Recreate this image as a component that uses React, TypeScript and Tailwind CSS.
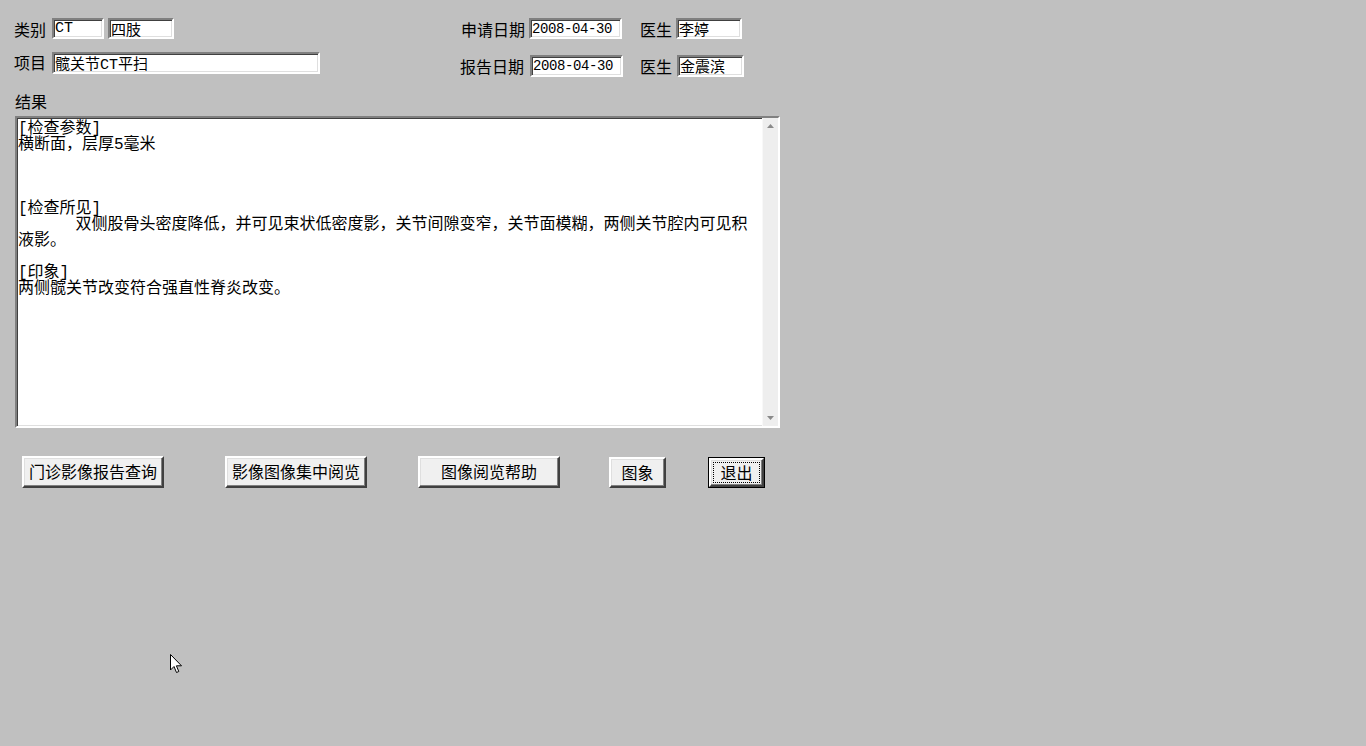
import React from "react";

const sunken =
  "border-2 border-t-[#808080] border-l-[#808080] border-b-white border-r-white shadow-[inset_1px_1px_0_#404040,inset_-1px_-1px_0_#dfdfdf] bg-white";
const raised =
  "border-2 border-t-white border-l-white border-b-[#404040] border-r-[#404040] shadow-[inset_-1px_-1px_0_#808080,inset_1px_1px_0_#dfdfdf] bg-[#f0f0f0]";

const cjk = { fontFamily: '"Noto Sans CJK SC", "Noto Sans", sans-serif' };
const mono = { fontFamily: '"Liberation Mono", "Noto Sans CJK SC", monospace' };

function Field({ value, className, date }: { value: string; className: string; date?: boolean }) {
  return (
    <input
      readOnly
      defaultValue={value}
      style={mono}
      className={`${sunken} ${className} outline-none px-[1px] text-black ${
        date ? "text-[14px] tracking-[-0.4px]" : "text-[15px]"
      } leading-[17px]`}
    />
  );
}

function Label({ text, className = "" }: { text: string; className?: string }) {
  return <span className={`text-[16px] leading-[16px] text-black whitespace-nowrap ${className}`}>{text}</span>;
}

function Button({ text, className, isDefault }: { text: string; className: string; isDefault?: boolean }) {
  if (isDefault) {
    return (
      <button className={`border border-black p-0 ${className}`}>
        <span className={`${raised} flex h-full w-full items-center justify-center p-[2px]`}>
          <span className="flex h-full w-full items-center justify-center border border-dotted border-black pb-[2px] text-[16px] leading-[16px]">
            {text}
          </span>
        </span>
      </button>
    );
  }
  return (
    <button className={`${raised} flex items-center justify-center pb-[2px] text-[16px] leading-[16px] text-black ${className}`}>
      {text}
    </button>
  );
}

const lines: string[] = [
  "[检查参数]",
  "横断面，层厚5毫米",
  "",
  "",
  "",
  "[检查所见]",
  "      双侧股骨头密度降低，并可见束状低密度影，关节间隙变窄，关节面模糊，两侧关节腔内可见积",
  "液影。",
  "",
  "[印象]",
  "两侧髋关节改变符合强直性脊炎改变。",
];

export default function App() {
  return (
    <div className="relative h-[746px] w-full overflow-hidden bg-[#c0c0c0] text-black" style={cjk}>
      <div className="pl-[14px] pt-[18px]">
        {/* header fields */}
        <div className="flex items-start">
          <div className="w-[446px]">
            <div className="flex h-[21px] items-center">
              <Label text="类别" className="w-[38px]" />
              <Field value="CT" className="h-[21px] w-[52px]" />
              <Field value="四肢" className="ml-[4px] h-[21px] w-[66px]" />
            </div>
            <div className="mt-[13px] flex h-[22px] items-center">
              <Label text="项目" className="mb-[3px] w-[38px]" />
              <Field value="髋关节CT平扫" className="h-[22px] w-[268px]" />
            </div>
          </div>
          <div>
            <div className="flex h-[21px] items-center">
              <Label text="申请日期" className="ml-[1px] w-[68px]" />
              <Field value="2008-04-30" date className="h-[21px] w-[93px]" />
              <Label text="医生" className="ml-[18px] w-[36px]" />
              <Field value="李婷" className="h-[21px] w-[66px]" />
            </div>
            <div className="mt-[16px] flex h-[22px] items-center">
              <Label text="报告日期" className="w-[70px]" />
              <Field value="2008-04-30" date className="h-[22px] w-[93px]" />
              <Label text="医生" className="ml-[17px] w-[37px]" />
              <Field value="金震滨" className="h-[22px] w-[67px]" />
            </div>
          </div>
        </div>

        <div className="mt-[16px] ml-[1px] flex h-[16px] items-center">
          <Label text="结果" />
        </div>

        {/* result memo */}
        <div className={`${sunken} mt-[7px] ml-[1px] flex h-[312px] w-[765px]`}>
          <div className="flex-1 overflow-hidden pl-[1px] pt-[3px] text-[16px] leading-[16px]" style={mono}>
            {lines.map((l, i) => (
              <div key={i} className="h-[16px] whitespace-pre">
                {l}
              </div>
            ))}
          </div>
          <div className="flex w-[16px] flex-col items-center justify-between border-l border-[#f8f8f8] bg-[#eeeeee] py-[6px]">
            <svg width="7" height="4" viewBox="0 0 7 4">
              <path d="M3.5 0 L7 4 L0 4 Z" fill="#8a8a8a" />
            </svg>
            <svg width="7" height="4" viewBox="0 0 7 4">
              <path d="M0 0 L7 0 L3.5 4 Z" fill="#8a8a8a" />
            </svg>
          </div>
        </div>

        {/* buttons */}
        <div className="mt-[28px] flex items-start">
          <Button text="门诊影像报告查询" className="ml-[8px] h-[32px] w-[142px]" />
          <Button text="影像图像集中阅览" className="ml-[61px] h-[32px] w-[142px]" />
          <Button text="图像阅览帮助" className="ml-[51px] h-[32px] w-[142px]" />
          <Button text="图象" className="ml-[49px] mt-[1px] h-[31px] w-[57px]" />
          <Button text="退出" isDefault className="ml-[42px] mt-[1px] h-[31px] w-[57px]" />
        </div>
      </div>

      {/* mouse pointer */}
      <svg className="absolute left-[170px] top-[654px]" width="13" height="20" viewBox="0 0 13 20">
        <path d="M0.5 0.5 L0.5 16 L4 12.5 L6.5 18.5 L8.8 17.5 L6.4 11.8 L11.5 11.8 Z" fill="white" stroke="black" strokeWidth="1" />
      </svg>
    </div>
  );
}
